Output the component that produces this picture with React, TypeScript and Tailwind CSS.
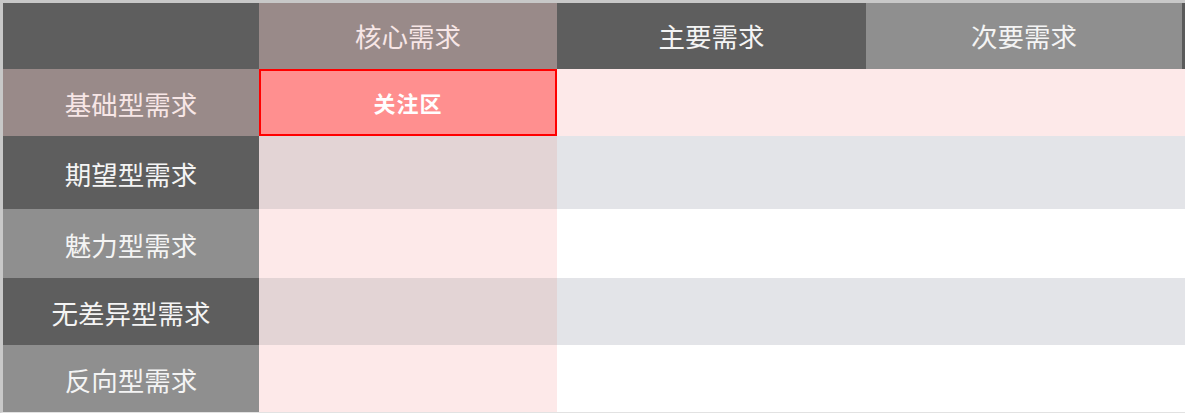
import React from 'react';

const cols = ['核心需求', '主要需求', '次要需求'];

const rows = [
  { label: '基础型需求', bg: 'bg-[#998a89]', text: 'text-[#f7e6e6]', h: 'h-[67px]', core: 'bg-[#ff8f8f]', rest: 'bg-[#fde9e9]', focus: true },
  { label: '期望型需求', bg: 'bg-[#5e5e5e]', text: 'text-[#f4f4f4]', h: 'h-[73px]', core: 'bg-[#e3d4d5]', rest: 'bg-[#e3e4e8]' },
  { label: '魅力型需求', bg: 'bg-[#8f8f8f]', text: 'text-[#f4f4f4]', h: 'h-[69px]', core: 'bg-[#fde9e9]', rest: 'bg-white' },
  { label: '无差异型需求', bg: 'bg-[#5e5e5e]', text: 'text-[#f4f4f4]', h: 'h-[67px]', core: 'bg-[#e3d4d5]', rest: 'bg-[#e3e4e8]' },
  { label: '反向型需求', bg: 'bg-[#8f8f8f]', text: 'text-[#f4f4f4]', h: 'h-[67px]', core: 'bg-[#fde9e9]', rest: 'bg-white' },
];

const font = "font-['Noto_Sans_CJK_SC','Noto_Sans',sans-serif]";

export default function App() {
  return (
    <div className={`w-[1185px] h-[413px] bg-white ${font}`}>
      <div className="border-t-[3px] border-l-[3px] border-b border-[#c8c8c8] border-b-[#e2e2e2]">
        {/* header */}
        <div className="flex h-[66px] text-[26.5px]">
          <div className="w-[256px] bg-[#5e5e5e]" />
          <div className="w-[298px] bg-[#998a89] text-[#f7e6e6] flex items-center justify-center">{cols[0]}</div>
          <div className="w-[309px] bg-[#5e5e5e] text-[#f4f4f4] flex items-center justify-center">{cols[1]}</div>
          <div className="w-[319px] bg-[#8f8f8f] text-[#f4f4f4] flex items-center justify-center border-r-[3px] border-[#5a5a5a]">{cols[2]}</div>
        </div>

        {rows.map((r) => (
          <div key={r.label} className={`flex ${r.h}`}>
            <div className={`w-[256px] ${r.bg} ${r.text} text-[26.5px] flex items-center justify-center pt-[2px]`}>{r.label}</div>
            <div
              className={`w-[298px] ${r.core} flex items-center justify-center ${
                r.focus ? 'border-2 border-[#ff0000]' : ''
              }`}
            >
              {r.focus && <span className="text-white text-[22px] font-bold tracking-[1px]">关注区</span>}
            </div>
            <div className={`flex-1 ${r.rest}`} />
          </div>
        ))}
      </div>
    </div>
  );
}
